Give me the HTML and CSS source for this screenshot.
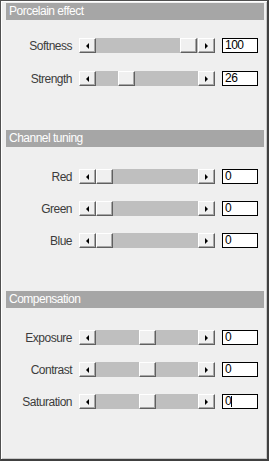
FILE: index.html
```html
<!DOCTYPE html>
<html lang="en">
<head>
    <meta charset="UTF-8">
    <meta name="viewport" content="width=device-width, initial-scale=1.0">
    <title>Porcelain effect</title>
    <link rel="stylesheet" href="styles.css">
</head>
<body>
    <div class="panel">
        <div class="section sec-porcelain">
            <div class="header">Porcelain effect</div>
            <div class="rows rows-first">
                <div class="row">
                    <span class="label">Softness</span>
                    <div class="scroll">
                        <span class="arrow left"></span>
                        <div class="track"><span class="thumb" style="margin-left: 84px"></span></div>
                        <span class="arrow right"></span>
                    </div>
                    <div class="value">100</div>
                </div>
                <div class="row">
                    <span class="label">Strength</span>
                    <div class="scroll">
                        <span class="arrow left"></span>
                        <div class="track"><span class="thumb" style="margin-left: 22px"></span></div>
                        <span class="arrow right"></span>
                    </div>
                    <div class="value">26</div>
                </div>
            </div>
        </div>

        <div class="section sec-channel">
            <div class="header">Channel tuning</div>
            <div class="rows">
                <div class="row">
                    <span class="label">Red</span>
                    <div class="scroll">
                        <span class="arrow left"></span>
                        <div class="track"><span class="thumb" style="margin-left: 0px"></span></div>
                        <span class="arrow right"></span>
                    </div>
                    <div class="value">0</div>
                </div>
                <div class="row">
                    <span class="label">Green</span>
                    <div class="scroll">
                        <span class="arrow left"></span>
                        <div class="track"><span class="thumb" style="margin-left: 0px"></span></div>
                        <span class="arrow right"></span>
                    </div>
                    <div class="value">0</div>
                </div>
                <div class="row">
                    <span class="label">Blue</span>
                    <div class="scroll">
                        <span class="arrow left"></span>
                        <div class="track"><span class="thumb" style="margin-left: 0px"></span></div>
                        <span class="arrow right"></span>
                    </div>
                    <div class="value">0</div>
                </div>
            </div>
        </div>

        <div class="section">
            <div class="header">Compensation</div>
            <div class="rows">
                <div class="row">
                    <span class="label">Exposure</span>
                    <div class="scroll">
                        <span class="arrow left"></span>
                        <div class="track"><span class="thumb" style="margin-left: 43px"></span></div>
                        <span class="arrow right"></span>
                    </div>
                    <div class="value">0</div>
                </div>
                <div class="row">
                    <span class="label">Contrast</span>
                    <div class="scroll">
                        <span class="arrow left"></span>
                        <div class="track"><span class="thumb" style="margin-left: 43px"></span></div>
                        <span class="arrow right"></span>
                    </div>
                    <div class="value">0</div>
                </div>
                <div class="row">
                    <span class="label">Saturation</span>
                    <div class="scroll">
                        <span class="arrow left"></span>
                        <div class="track"><span class="thumb" style="margin-left: 43px"></span></div>
                        <span class="arrow right"></span>
                    </div>
                    <div class="value">0<span class="caret"></span></div>
                </div>
            </div>
        </div>
    </div>
</body>
</html>
```

FILE: styles.css
```css
body {
    margin: 0;
    font-family: "Liberation Sans", Arial, sans-serif;
    font-size: 12px;
    letter-spacing: -0.5px;
    background-color: #efefef;
}
.panel {
    width: 269px;
    height: 461px;
    box-sizing: border-box;
    background-color: #efefef;
    border-top: 1px solid #505050;
    border-left: 1px solid #505050;
    border-right: 2px solid #404040;
    border-bottom: 2px solid #404040;
    box-shadow: inset 1px 1px 0 #ffffff, inset -1px -1px 0 #c8c8c8;
    padding: 2px 3px 0 5px;
}
.header {
    height: 17px;
    line-height: 17px;
    background-color: #a6a6a6;
    color: white;
    padding-left: 3px;
}
.sec-porcelain {
    height: 127px;
}
.sec-channel {
    height: 161px;
}
.rows {
    display: flex;
    flex-direction: column;
    gap: 17px;
    margin-top: 22px;
}
.rows-first {
    margin-top: 18px;
    gap: 18px;
}
.row {
    display: flex;
    align-items: center;
    height: 15px;
}
.label {
    width: 66px;
    text-align: right;
    color: #3c3c3c;
    margin-right: 7px;
}
.scroll {
    display: flex;
    width: 136px;
    height: 15px;
}
.arrow, .thumb {
    box-sizing: border-box;
    height: 15px;
    background-color: #f0f0f0;
    border-top: 1px solid #ffffff;
    border-left: 1px solid #ffffff;
    border-right: 1px solid #606060;
    border-bottom: 1px solid #606060;
    box-shadow: inset -1px -1px 0 #a8a8a8;
}
.arrow {
    width: 17px;
    display: flex;
    align-items: center;
    justify-content: center;
}
.arrow::before {
    content: "";
    width: 0;
    height: 0;
    border-top: 3px solid transparent;
    border-bottom: 3px solid transparent;
}
.arrow.left::before {
    border-right: 3px solid #000;
    margin-right: 1px;
}
.arrow.right::before {
    border-left: 3px solid #000;
}
.track {
    flex: 1;
    display: flex;
    background-color: #bfbfbf;
}
.thumb {
    width: 17px;
}
.value {
    box-sizing: border-box;
    width: 36px;
    height: 15px;
    margin-left: 7px;
    border: 1px solid #000;
    background-color: white;
    line-height: 13px;
    padding-left: 2px;
    color: #000;
    display: flex;
    align-items: center;
}
.caret {
    width: 1px;
    height: 11px;
    background-color: #000;
}
```
